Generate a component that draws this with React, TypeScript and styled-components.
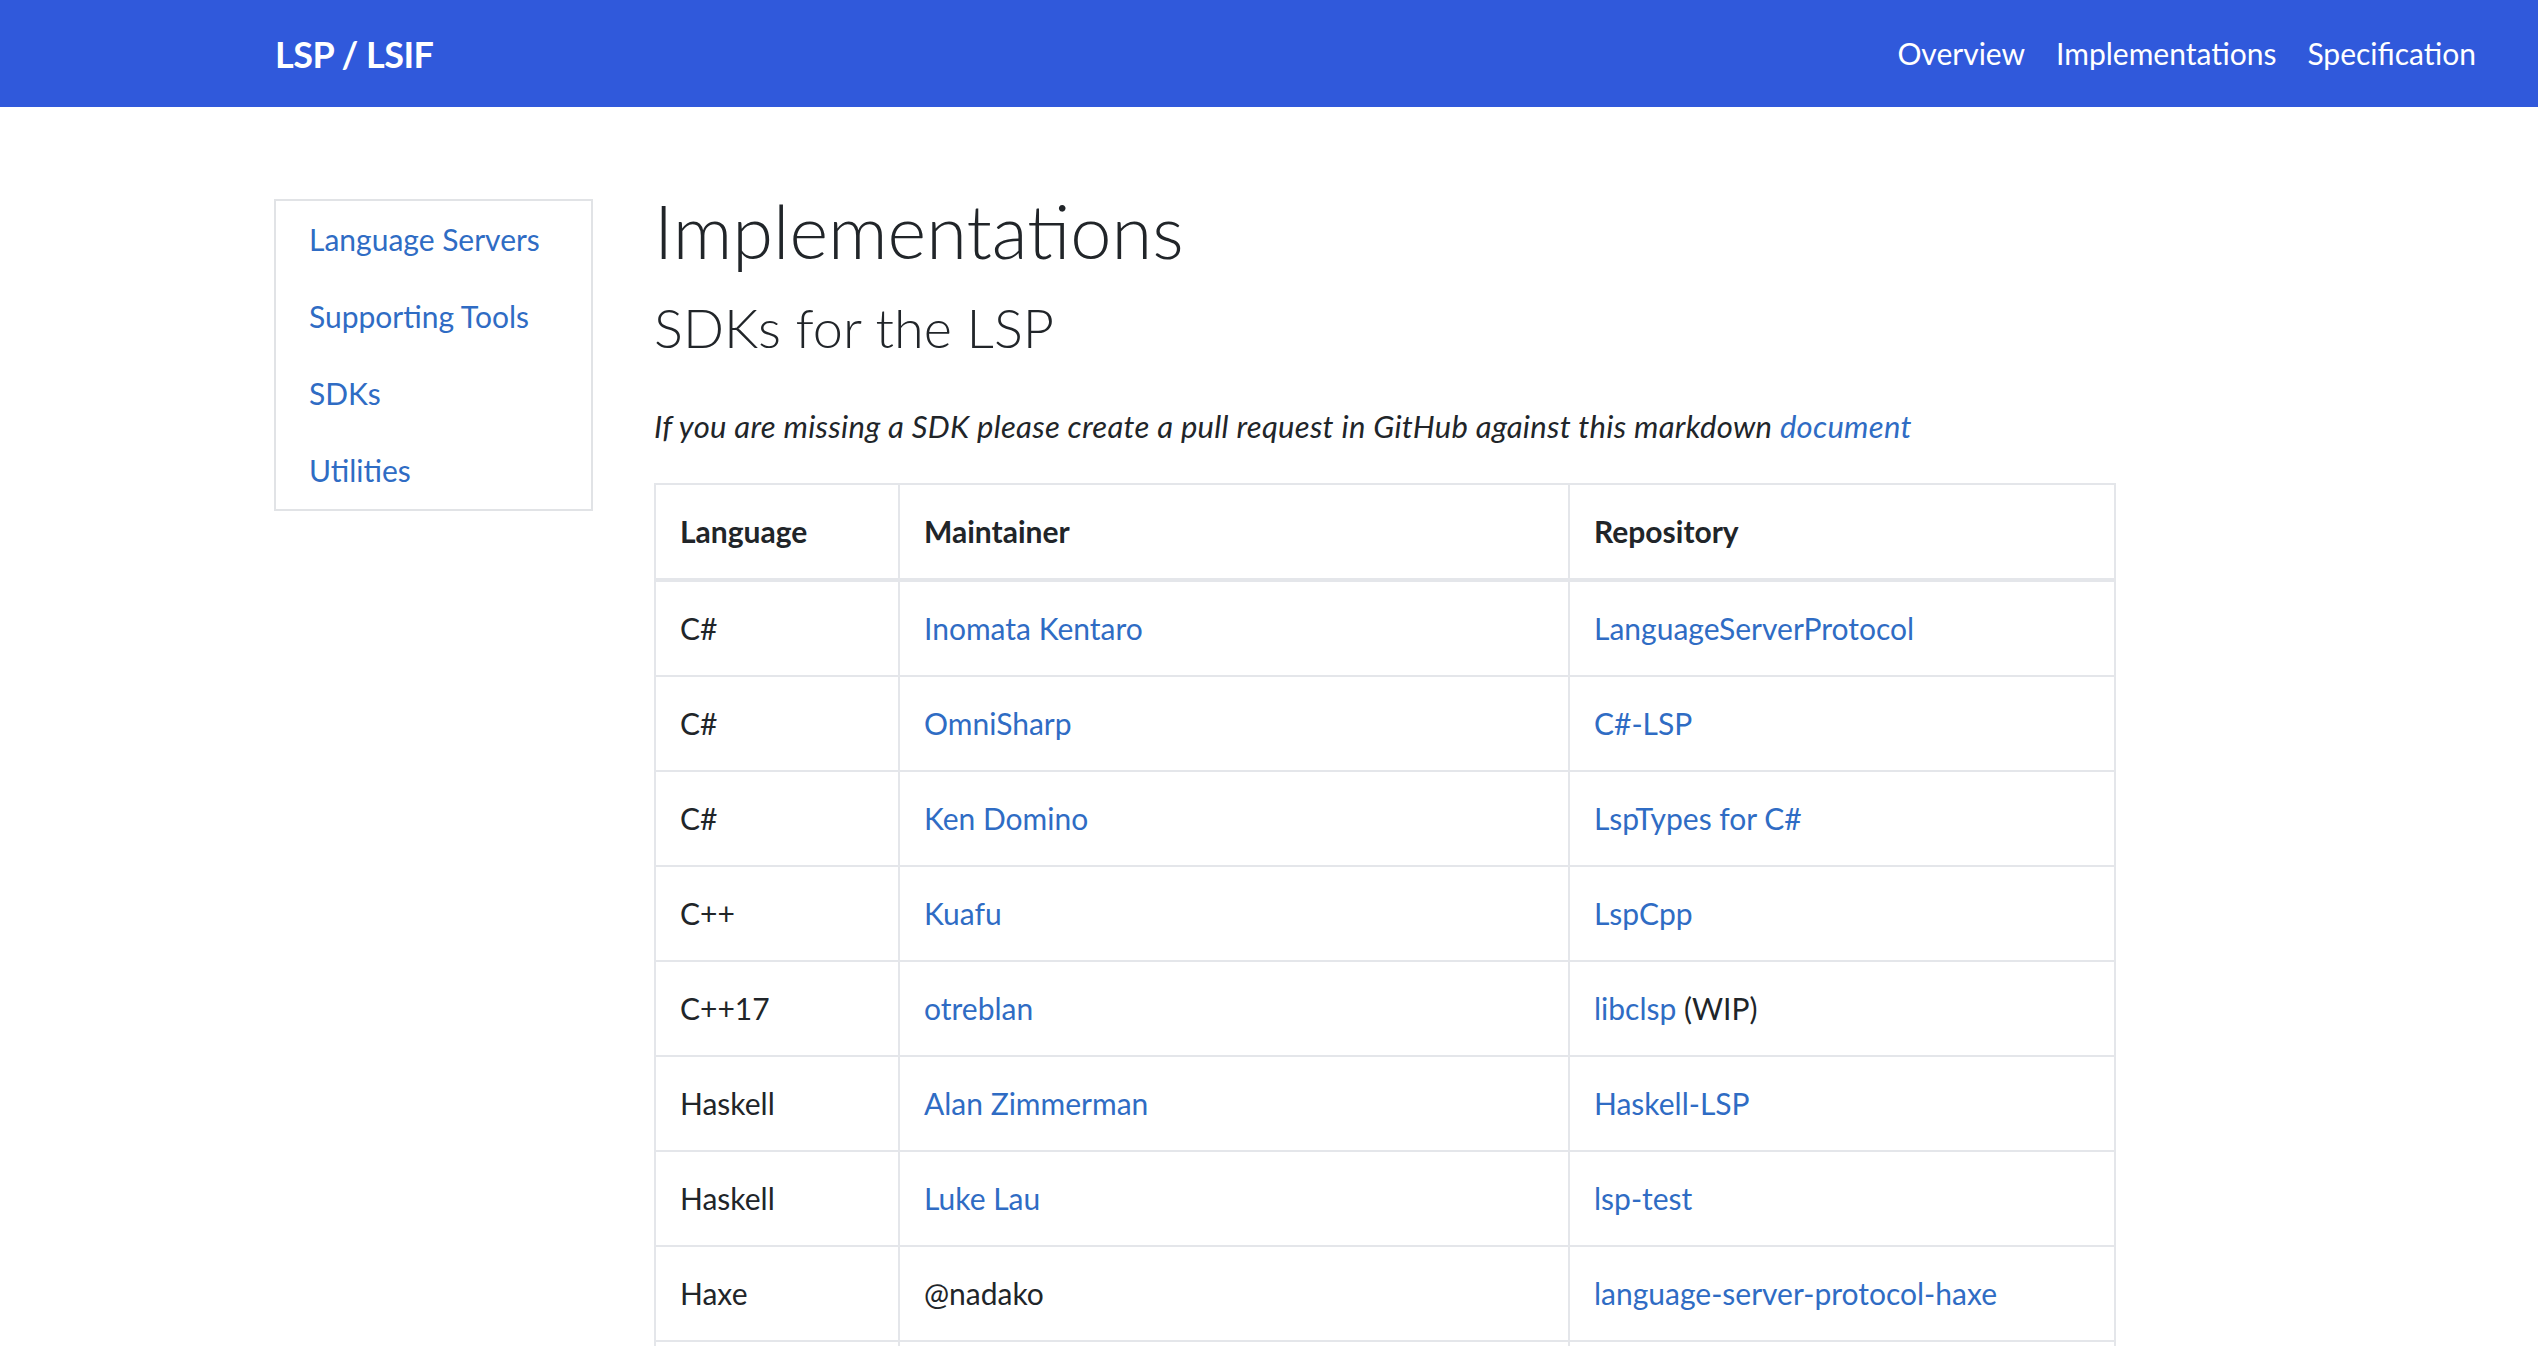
import React from "react";
import styled, { createGlobalStyle } from "styled-components";

const Global = createGlobalStyle`
  html, body { margin: 0; padding: 0; background: #ffffff; }
  body {
    font-family: Lato, "Open Sans", "Liberation Sans", sans-serif;
    font-size: 31px;
    line-height: 1.5;
    color: #212529;
  }
  * { box-sizing: border-box; }
`;

const Header = styled.header`
  height: 107px;
  background: #3059db;
  display: flex;
  align-items: center;
  justify-content: space-between;
  padding: 0 62px 0 275px;
`;

const Brand = styled.a`
  color: #ffffff;
  font-weight: 700;
  font-size: 36px;
  text-decoration: none;
  letter-spacing: -0.5px;
`;

const Nav = styled.nav`
  display: flex;
  gap: 31px;
`;

const NavLink = styled.a`
  color: #ffffff;
  font-size: 30px;
  text-decoration: none;
`;

const Page = styled.div`
  display: flex;
  align-items: flex-start;
  gap: 61px;
  padding: 80px 0 0 274px;
`;

const Sidebar = styled.aside`
  margin-top: 12px;
  width: 319px;
  border: 2px solid #e1e3e6;
  display: flex;
  flex-direction: column;
`;

const SideLink = styled.a`
  color: #2f6cc4;
  text-decoration: none;
  padding: 15.25px 33px;
  font-size: 30px;
  line-height: 46.5px;
`;

const Main = styled.main`
  display: flex;
  flex-direction: column;
`;

const Title = styled.h1`
  margin: 0;
  font-weight: 300;
  font-size: 74px;
  line-height: 1.2;
  color: #212529;
`;

const Subtitle = styled.h2`
  margin: 20px 0 0;
  font-weight: 300;
  font-size: 54px;
  line-height: 1.2;
  color: #212529;
`;

const Note = styled.p`
  margin: 42px 0 34px;
  font-style: italic;
  font-size: 31px;
  letter-spacing: 0.3px;
  line-height: 46.5px;
`;

const Link = styled.a`
  color: #2f6cc4;
  text-decoration: none;
`;

const Table = styled.table`
  border-collapse: collapse;
  width: 1460px;
  table-layout: fixed;
  border: 2px solid #e4e6ea;
`;

const Th = styled.th<{ $w: number }>`
  width: ${(p) => p.$w}px;
  text-align: left;
  font-weight: 700;
  font-size: 30px;
  line-height: 46.5px;
  padding: 23.25px 24px;
  border: 2px solid #e4e6ea;
  border-bottom-width: 4px;
`;

const Td = styled.td`
  font-size: 30px;
  line-height: 46.5px;
  padding: 23.25px 24px;
  border: 2px solid #e4e6ea;
  white-space: nowrap;
`;

type Cell = { text: string; link?: boolean; suffix?: string };
type Row = [string, Cell, Cell];

const rows: Row[] = [
  ["C#", { text: "Inomata Kentaro", link: true }, { text: "LanguageServerProtocol", link: true }],
  ["C#", { text: "OmniSharp", link: true }, { text: "C#-LSP", link: true }],
  ["C#", { text: "Ken Domino", link: true }, { text: "LspTypes for C#", link: true }],
  ["C++", { text: "Kuafu", link: true }, { text: "LspCpp", link: true }],
  ["C++17", { text: "otreblan", link: true }, { text: "libclsp", link: true, suffix: " (WIP)" }],
  ["Haskell", { text: "Alan Zimmerman", link: true }, { text: "Haskell-LSP", link: true }],
  ["Haskell", { text: "Luke Lau", link: true }, { text: "lsp-test", link: true }],
  ["Haxe", { text: "@nadako" }, { text: "language-server-protocol-haxe", link: true }],
  ["Java", { text: "Eclipse", link: true }, { text: "LSP4J", link: true }],
];

const renderCell = (c: Cell) => (
  <>
    {c.link ? <Link href="#">{c.text}</Link> : c.text}
    {c.suffix}
  </>
);

export default function App() {
  return (
    <>
      <Global />
      <Header>
        <Brand href="#">LSP / LSIF</Brand>
        <Nav>
          <NavLink href="#">Overview</NavLink>
          <NavLink href="#">Implementations</NavLink>
          <NavLink href="#">Specification</NavLink>
        </Nav>
      </Header>
      <Page>
        <Sidebar>
          <SideLink href="#">Language Servers</SideLink>
          <SideLink href="#">Supporting Tools</SideLink>
          <SideLink href="#">SDKs</SideLink>
          <SideLink href="#">Utilities</SideLink>
        </Sidebar>
        <Main>
          <Title>Implementations</Title>
          <Subtitle>SDKs for the LSP</Subtitle>
          <Note>
            If you are missing a SDK please create a pull request in GitHub against this markdown{" "}
            <Link href="#">document</Link>
          </Note>
          <Table>
            <thead>
              <tr>
                <Th $w={244}>Language</Th>
                <Th $w={670}>Maintainer</Th>
                <Th $w={546}>Repository</Th>
              </tr>
            </thead>
            <tbody>
              {rows.map((r, i) => (
                <tr key={i}>
                  <Td>{r[0]}</Td>
                  <Td>{renderCell(r[1])}</Td>
                  <Td>{renderCell(r[2])}</Td>
                </tr>
              ))}
            </tbody>
          </Table>
        </Main>
      </Page>
    </>
  );
}
